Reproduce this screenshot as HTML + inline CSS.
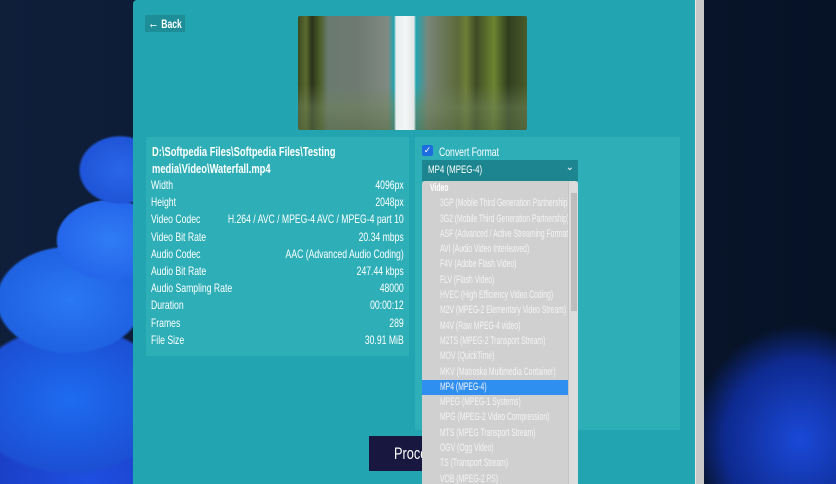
<!DOCTYPE html>
<html><head><meta charset="utf-8"><style>
*{margin:0;padding:0;box-sizing:border-box}
body{width:836px;height:484px;overflow:hidden;position:relative;background:#0b1a30;font-family:"Liberation Sans",sans-serif;color:#fff}
.bg{position:absolute;inset:0;background:
radial-gradient(ellipse 60px 50px at 120px 170px,#2a66e8 0,#1f55d8 65%,transparent 70%),
radial-gradient(ellipse 80px 60px at 110px 240px,#2f7cf5 0,#2566ea 65%,transparent 68%),
radial-gradient(ellipse 110px 80px at 70px 300px,#2a78f4 0,#1f62e2 65%,transparent 68%),
radial-gradient(ellipse 150px 110px at 70px 400px,#1d6cf0 0,#1c4fd4 65%,transparent 68%),
radial-gradient(ellipse 200px 120px at 90px 480px,#1e4fe0 0,#1a3bc0 60%,transparent 64%),
radial-gradient(ellipse 150px 160px at 800px 440px,#1a49d8 0,#0e2a90 50%,transparent 72%),
linear-gradient(90deg,#0f1f3a,#0a1830 50%,#061226)}
.win{position:absolute;left:133px;top:0;width:562px;height:484px;background:#22a5b0;border-radius:4px 0 0 0}
.sb{position:absolute;left:695px;top:0;width:9px;height:484px;background:#c8c8c8;border-left:1px solid #e6e6e6}
.c{transform-origin:0 0;transform:scaleX(.72);white-space:nowrap}
.back{position:absolute;left:145px;top:15px;width:40px;height:17px;background:#1d8d98}
.back span{position:absolute;left:3px;top:1px;font-size:12px;font-weight:bold;line-height:15px}
.back b{font-size:15px}
.img{position:absolute;left:298px;top:16px;width:229px;height:114px;border-radius:2px;overflow:hidden;background:
linear-gradient(90deg,transparent 0,transparent 96px,#e8eef0 98px,#f4f6f6 108px,#dfe5e4 116px,transparent 118px),
linear-gradient(transparent 60%,rgba(110,130,90,.5) 80%,rgba(90,110,70,.6)),
linear-gradient(90deg,#3c4a22 0,#5a6a2c 8px,#2a321a 14px,#4c5e28 22px,#6a7a70 30px,#6e7a72 60px,#808a82 90px,transparent 96px,transparent 118px,#7a8578 130px,#5b6a3a 160px,#6e7e38 168px,#3f4c26 178px,#6c8430 196px,#2f3d1e 210px,#4a5c2a 229px)}
.l{position:absolute;left:146px;top:137px;width:263px;height:219px;background:#2eafb8}
.r{position:absolute;left:415px;top:137px;width:265px;height:293px;background:#2eafb8}
.path{position:absolute;left:152px;top:143px;font-size:13px;font-weight:bold;line-height:17px}
.rows{position:absolute;left:151px;top:178px;width:351px;transform-origin:0 0;transform:scaleX(.72)}
.row{height:17.2px;font-size:12px;line-height:14px;display:flex;justify-content:space-between;white-space:nowrap}
.cb{position:absolute;left:422px;top:145px;width:11px;height:11px;background:#1e6de0;border-radius:2px;font-size:9px;line-height:11px;text-align:center}
.cf{position:absolute;left:439px;top:145px;font-size:12px}
.sel{position:absolute;left:422px;top:160px;width:156px;height:21px;background:#1d858f}
.sel .c{position:absolute;left:6px;top:4px;font-size:11px}
.sel b{position:absolute;right:4px;top:2px;font-size:10px;font-weight:normal}
.list{position:absolute;left:422px;top:181px;width:156px;height:303px;background:#d0d0d0;border-radius:3px 3px 0 0;overflow:hidden}
.it{height:15.3px;position:relative;width:146px}
.it span{position:absolute;left:18px;top:1px;font-size:11px;line-height:13px;color:#f4f4f4;transform-origin:0 0;transform:scaleX(.62);white-space:nowrap}
.it.h span{left:8px;font-weight:bold;color:#fff}
.it.s{background:#2e8ff0}
.lsb{position:absolute;right:0;top:0;width:10px;height:303px;background:#dcdcdc;border-left:1px solid #c4c4c4}
.lsb i{position:absolute;left:2px;top:12px;width:6px;height:118px;background:#bdbdbd}
.btn{position:absolute;left:369px;top:436px;width:100px;height:35px;background:#17173f}
.btn span{position:absolute;left:25px;top:8px;font-size:17px;transform-origin:0 0;transform:scaleX(.75)}
</style></head><body>
<div class="bg"></div>
<div class="win"></div>
<div class="sb"></div>
<div class="back"><span class="c"><b>&#8592;</b> Back</span></div>
<div class="img"></div>
<div class="l"></div><div class="r"></div>
<div class="path c">D:\Softpedia Files\Softpedia Files\Testing<br>media\Video\Waterfall.mp4</div>
<div class="rows">
<div class="row"><span>Width</span><span>4096px</span></div>
<div class="row"><span>Height</span><span>2048px</span></div>
<div class="row"><span>Video Codec</span><span>H.264 / AVC / MPEG-4 AVC / MPEG-4 part 10</span></div>
<div class="row"><span>Video Bit Rate</span><span>20.34 mbps</span></div>
<div class="row"><span>Audio Codec</span><span>AAC (Advanced Audio Coding)</span></div>
<div class="row"><span>Audio Bit Rate</span><span>247.44 kbps</span></div>
<div class="row"><span>Audio Sampling Rate</span><span>48000</span></div>
<div class="row"><span>Duration</span><span>00:00:12</span></div>
<div class="row"><span>Frames</span><span>289</span></div>
<div class="row"><span>File Size</span><span>30.91 MiB</span></div>
</div>
<div class="cb">&#10003;</div><div class="cf c">Convert Format</div>
<div class="btn"><span>Process</span></div>
<div class="sel"><span class="c">MP4 (MPEG-4)</span><b>&#8964;</b></div>
<div class="list">
<div class="it h"><span>Video</span></div>
<div class="it"><span>3GP (Mobile Third Generation Partnership)</span></div>
<div class="it"><span>3G2 (Mobile Third Generation Partnership)</span></div>
<div class="it"><span>ASF (Advanced / Active Streaming Format)</span></div>
<div class="it"><span>AVI (Audio Video Interleaved)</span></div>
<div class="it"><span>F4V (Adobe Flash Video)</span></div>
<div class="it"><span>FLV (Flash Video)</span></div>
<div class="it"><span>HVEC (High Efficiency Video Coding)</span></div>
<div class="it"><span>M2V (MPEG-2 Elementary Video Stream)</span></div>
<div class="it"><span>M4V (Raw MPEG-4 video)</span></div>
<div class="it"><span>M2TS (MPEG-2 Transport Stream)</span></div>
<div class="it"><span>MOV (QuickTime)</span></div>
<div class="it"><span>MKV (Matroska Multimedia Container)</span></div>
<div class="it s"><span>MP4 (MPEG-4)</span></div>
<div class="it"><span>MPEG (MPEG-1 Systems)</span></div>
<div class="it"><span>MPG (MPEG-2 Video Compression)</span></div>
<div class="it"><span>MTS (MPEG Transport Stream)</span></div>
<div class="it"><span>OGV (Ogg Video)</span></div>
<div class="it"><span>TS (Transport Stream)</span></div>
<div class="it"><span>VOB (MPEG-2 PS)</span></div>
<div class="lsb"><i></i></div>
</div>
</body></html>
